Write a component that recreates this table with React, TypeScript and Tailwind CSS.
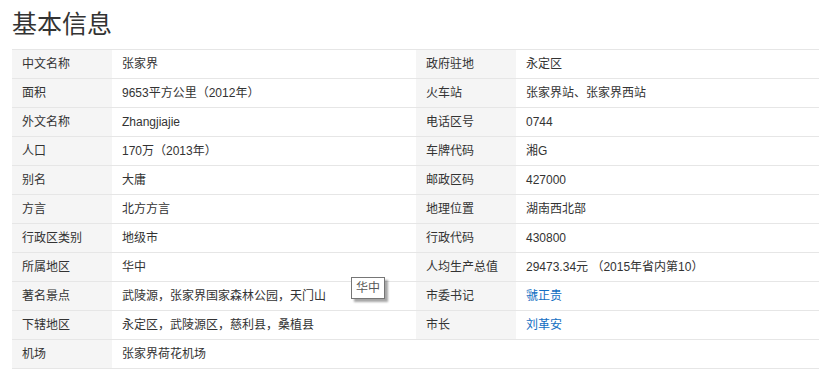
const font = "font-['Liberation_Sans','Noto_Sans_CJK_SC',sans-serif]";

type Cell = { label: string; value: string; link?: boolean } | null;

const rows: [Cell, Cell][] = [
  [{ label: "中文名称", value: "张家界" }, { label: "政府驻地", value: "永定区" }],
  [{ label: "面积", value: "9653平方公里（2012年）" }, { label: "火车站", value: "张家界站、张家界西站" }],
  [{ label: "外文名称", value: "Zhangjiajie" }, { label: "电话区号", value: "0744" }],
  [{ label: "人口", value: "170万（2013年）" }, { label: "车牌代码", value: "湘G" }],
  [{ label: "别名", value: "大庸" }, { label: "邮政区码", value: "427000" }],
  [{ label: "方言", value: "北方方言" }, { label: "地理位置", value: "湖南西北部" }],
  [{ label: "行政区类别", value: "地级市" }, { label: "行政代码", value: "430800" }],
  [{ label: "所属地区", value: "华中" }, { label: "人均生产总值", value: "29473.34元 （2015年省内第10）" }],
  [{ label: "著名景点", value: "武陵源，张家界国家森林公园，天门山" }, { label: "市委书记", value: "虢正贵", link: true }],
  [{ label: "下辖地区", value: "永定区，武陵源区，慈利县，桑植县" }, { label: "市长", value: "刘革安", link: true }],
  [{ label: "机场", value: "张家界荷花机场" }, null],
];

function Half({ cell }: { cell: Cell }) {
  return (
    <div className="flex h-[29px] border-b border-[#e6e6e6]">
      <div className={`w-[100px] pl-[10px] flex items-center ${cell ? "bg-[#f5f5f5]" : ""}`}>
        {cell?.label}
      </div>
      <div className={`flex-1 pl-[10px] flex items-center ${cell?.link ? "text-[#136ec2]" : ""}`}>
        {cell?.value}
      </div>
    </div>
  );
}

export default function App() {
  return (
    <div className={`relative w-[834px] h-[381px] bg-white text-[#333] ${font}`}>
      <h2 className="pl-[12px] pt-[6px] h-[49px] text-[25px] leading-[36px] text-[#333]">基本信息</h2>
      <div className="ml-[12px] w-[807px] border-t border-[#e6e6e6] text-[12px]">
        {rows.map(([l, r], i) => (
          <div key={i} className="grid grid-cols-[404px_403px]">
            <Half cell={l} />
            <Half cell={r} />
          </div>
        ))}
      </div>
      {/* hover tooltip */}
      <div className="absolute left-[351px] top-[277px] h-[22px] px-[4px] flex items-center border border-[#767676] bg-white text-[12px] text-[#575757] shadow-[3px_3px_2px_rgba(0,0,0,0.35)]">
        华中
      </div>
    </div>
  );
}
